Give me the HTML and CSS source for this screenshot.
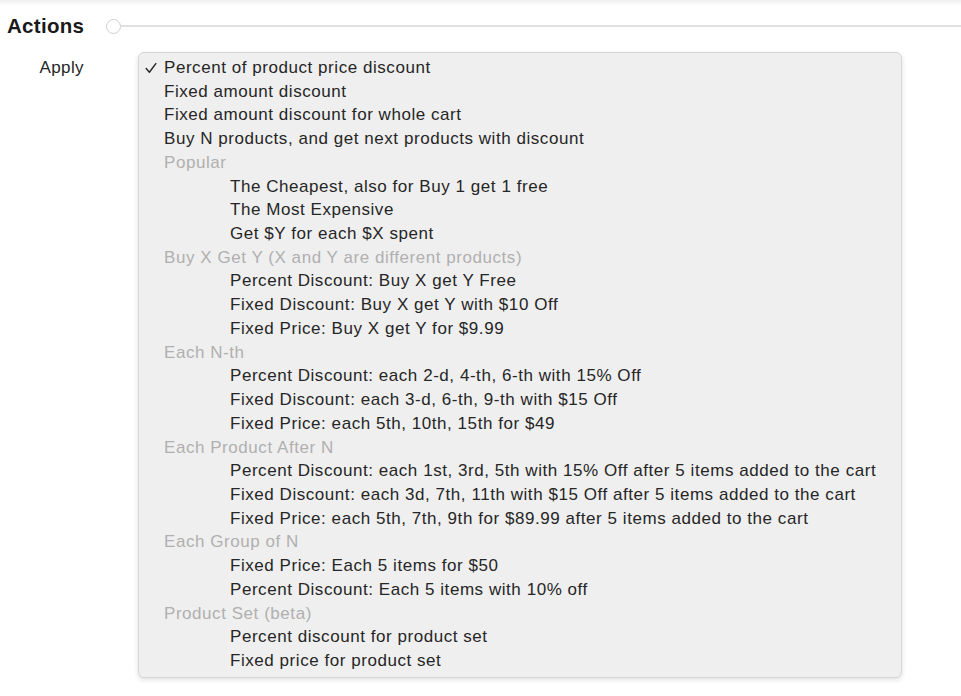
FILE: index.html
```html
<!DOCTYPE html>
<html>
<head>
<meta charset="utf-8">
<link rel="stylesheet" href="styles.css">
</head>
<body>
<div class="topshade"></div>
<div class="section-head">
  <h2 class="title">Actions</h2>
  <span class="dot"></span>
  <span class="rule"></span>
</div>
<div class="field">
  <div class="label">Apply</div>
  <div class="menu">
    <div class="opt selected"><svg class="check" width="12" height="12" viewBox="0 0 12 12"><path d="M1.2 6.6 L4.4 10.2 L10.8 1.6" fill="none" stroke="#2a2a2a" stroke-width="1.5" stroke-linecap="round" stroke-linejoin="round"/></svg>Percent of product price discount</div>
    <div class="opt">Fixed amount discount</div>
    <div class="opt">Fixed amount discount for whole cart</div>
    <div class="opt">Buy N products, and get next products with discount</div>
    <div class="grp">Popular</div>
    <div class="opt sub">The Cheapest, also for Buy 1 get 1 free</div>
    <div class="opt sub">The Most Expensive</div>
    <div class="opt sub">Get $Y for each $X spent</div>
    <div class="grp">Buy X Get Y (X and Y are different products)</div>
    <div class="opt sub">Percent Discount: Buy X get Y Free</div>
    <div class="opt sub">Fixed Discount: Buy X get Y with $10 Off</div>
    <div class="opt sub">Fixed Price: Buy X get Y for $9.99</div>
    <div class="grp">Each N-th</div>
    <div class="opt sub">Percent Discount: each 2-d, 4-th, 6-th with 15% Off</div>
    <div class="opt sub">Fixed Discount: each 3-d, 6-th, 9-th with $15 Off</div>
    <div class="opt sub">Fixed Price: each 5th, 10th, 15th for $49</div>
    <div class="grp">Each Product After N</div>
    <div class="opt sub">Percent Discount: each 1st, 3rd, 5th with 15% Off after 5 items added to the cart</div>
    <div class="opt sub">Fixed Discount: each 3d, 7th, 11th with $15 Off after 5 items added to the cart</div>
    <div class="opt sub">Fixed Price: each 5th, 7th, 9th for $89.99 after 5 items added to the cart</div>
    <div class="grp">Each Group of N</div>
    <div class="opt sub">Fixed Price: Each 5 items for $50</div>
    <div class="opt sub">Percent Discount: Each 5 items with 10% off</div>
    <div class="grp">Product Set (beta)</div>
    <div class="opt sub">Percent discount for product set</div>
    <div class="opt sub">Fixed price for product set</div>
  </div>
</div>
</body>
</html>
```
FILE: styles.css
```css
html, body {
  margin: 0;
  padding: 0;
  background: #fff;
  font-family: "Liberation Sans", Arial, sans-serif;
  color: #262626;
}
body {
  width: 961px;
  height: 696px;
  overflow: hidden;
  position: relative;
}
.topshade {
  height: 6px;
  background: linear-gradient(#f0f0f0, #fff);
}
.section-head {
  display: flex;
  align-items: center;
  height: 40px;
  padding-left: 7px;
}
.title {
  margin: 0;
  font-size: 20.5px;
  font-weight: bold;
  color: #1a1a1a;
  letter-spacing: 0.3px;
}
.dot {
  width: 13px;
  height: 13px;
  border: 1px solid #cfcfcf;
  border-radius: 50%;
  background: #fff;
  margin-left: 22px;
  flex: none;
}
.rule {
  flex: 1;
  height: 2px;
  background: #e0e0e0;
}
.field {
  display: flex;
  align-items: flex-start;
  margin-top: 6px;
}
.label {
  width: 84px;
  text-align: right;
  font-size: 17px;
  letter-spacing: 0.4px;
  padding-top: 4px;
  line-height: 23.7px;
}
.menu {
  margin-left: 54px;
  width: 764px;
  box-sizing: border-box;
  background: #efefef;
  border: 1px solid #d6d6d6;
  border-radius: 6px;
  box-shadow: 0 2px 5px rgba(0,0,0,0.12);
  padding: 3px 0 4px 0;
  display: flex;
  flex-direction: column;
}
.opt, .grp {
  height: 23.72px;
  line-height: 23.72px;
  font-size: 17px;
  letter-spacing: 0.55px;
  padding-left: 25px;
  white-space: nowrap;
  position: relative;
}
.grp {
  color: #b0b0b0;
}
.opt.sub {
  padding-left: 91px;
}
.check {
  position: absolute;
  left: 6px;
  top: 6px;
}
```
